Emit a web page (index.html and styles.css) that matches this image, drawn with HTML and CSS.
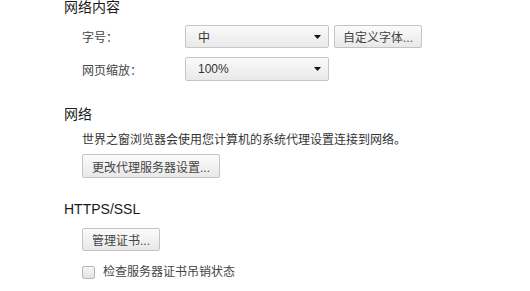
FILE: index.html
```html
<!DOCTYPE html>
<html lang="zh-CN">
<head>
    <meta charset="UTF-8">
    <title>设置</title>
    <link rel="stylesheet" href="styles.css">
</head>
<body>
    <div class="page">
        <h3 class="title first">网络内容</h3>
        <div class="row">
            <span class="label">字号：</span>
            <div class="select">
                <span>中</span>
                <svg class="arrow" width="7" height="4" viewBox="0 0 7 4"><path d="M0 0H7L3.5 4Z" fill="#111"/></svg>
            </div>
            <button class="btn">自定义字体...</button>
        </div>
        <div class="row second">
            <span class="label">网页缩放：</span>
            <div class="select tall">
                <span>100%</span>
                <svg class="arrow" width="7" height="4" viewBox="0 0 7 4"><path d="M0 0H7L3.5 4Z" fill="#111"/></svg>
            </div>
        </div>

        <h3 class="title net">网络</h3>
        <p class="desc">世界之窗浏览器会使用您计算机的系统代理设置连接到网络。</p>
        <button class="btn proxy">更改代理服务器设置...</button>

        <h3 class="title ssl">HTTPS/SSL</h3>
        <button class="btn cert">管理证书...</button>
        <label class="check">
            <span class="box"></span>
            <span>检查服务器证书吊销状态</span>
        </label>
    </div>
</body>
</html>
```

FILE: styles.css
```css
body {
    margin: 0;
    background: #ffffff;
    font-family: 'Liberation Sans', 'Noto Sans CJK SC', sans-serif;
    font-size: 12px;
    color: #333;
}
.page {
    padding-left: 64px;
}
.title {
    margin: 0;
    font-size: 14px;
    font-weight: normal;
    line-height: 20px;
    color: #1a1a1a;
}
.title.first {
    margin-top: -3px;
}
.title.net {
    margin-top: 23px;
}
.title.ssl {
    margin-top: 21px;
}
.row {
    display: flex;
    align-items: center;
    margin: 8px 0 0 18px;
}
.row.second {
    margin-top: 9px;
}
.label {
    width: 103px;
    color: #444;
}
.select {
    box-sizing: border-box;
    width: 144px;
    height: 23px;
    display: flex;
    align-items: center;
    justify-content: space-between;
    padding: 0 7px 0 12px;
    border: 1px solid #c6c6c6;
    border-radius: 2px;
    background: linear-gradient(#fafafa, #e9e9e9);
}
.select.tall {
    height: 24px;
}
.btn {
    box-sizing: border-box;
    height: 23px;
    padding: 0 4px;
    margin: 0;
    border: 1px solid #c3c3c3;
    border-radius: 2px;
    background: linear-gradient(#fbfbfb, #e8e8e8);
    font-family: inherit;
    font-size: 12px;
    color: #444;
    white-space: nowrap;
    text-align: center;
}
.row .btn {
    margin-left: 5px;
    width: 88px;
}
.desc {
    margin: 6px 0 0 18px;
    line-height: 20px;
}
.proxy {
    display: block;
    margin: 4px 0 0 18px;
    height: 24px;
    width: 138px;
}
.cert {
    display: block;
    margin: 9px 0 0 18px;
    width: 78px;
}
.check {
    display: flex;
    align-items: center;
    margin: 11px 0 0 18px;
    line-height: 20px;
    color: #444;
}
.box {
    box-sizing: border-box;
    width: 13px;
    height: 13px;
    margin-right: 8px;
    border: 1px solid #b5b5b5;
    border-radius: 2px;
    background: linear-gradient(#f6f6f6, #e2e2e2);
}
```
